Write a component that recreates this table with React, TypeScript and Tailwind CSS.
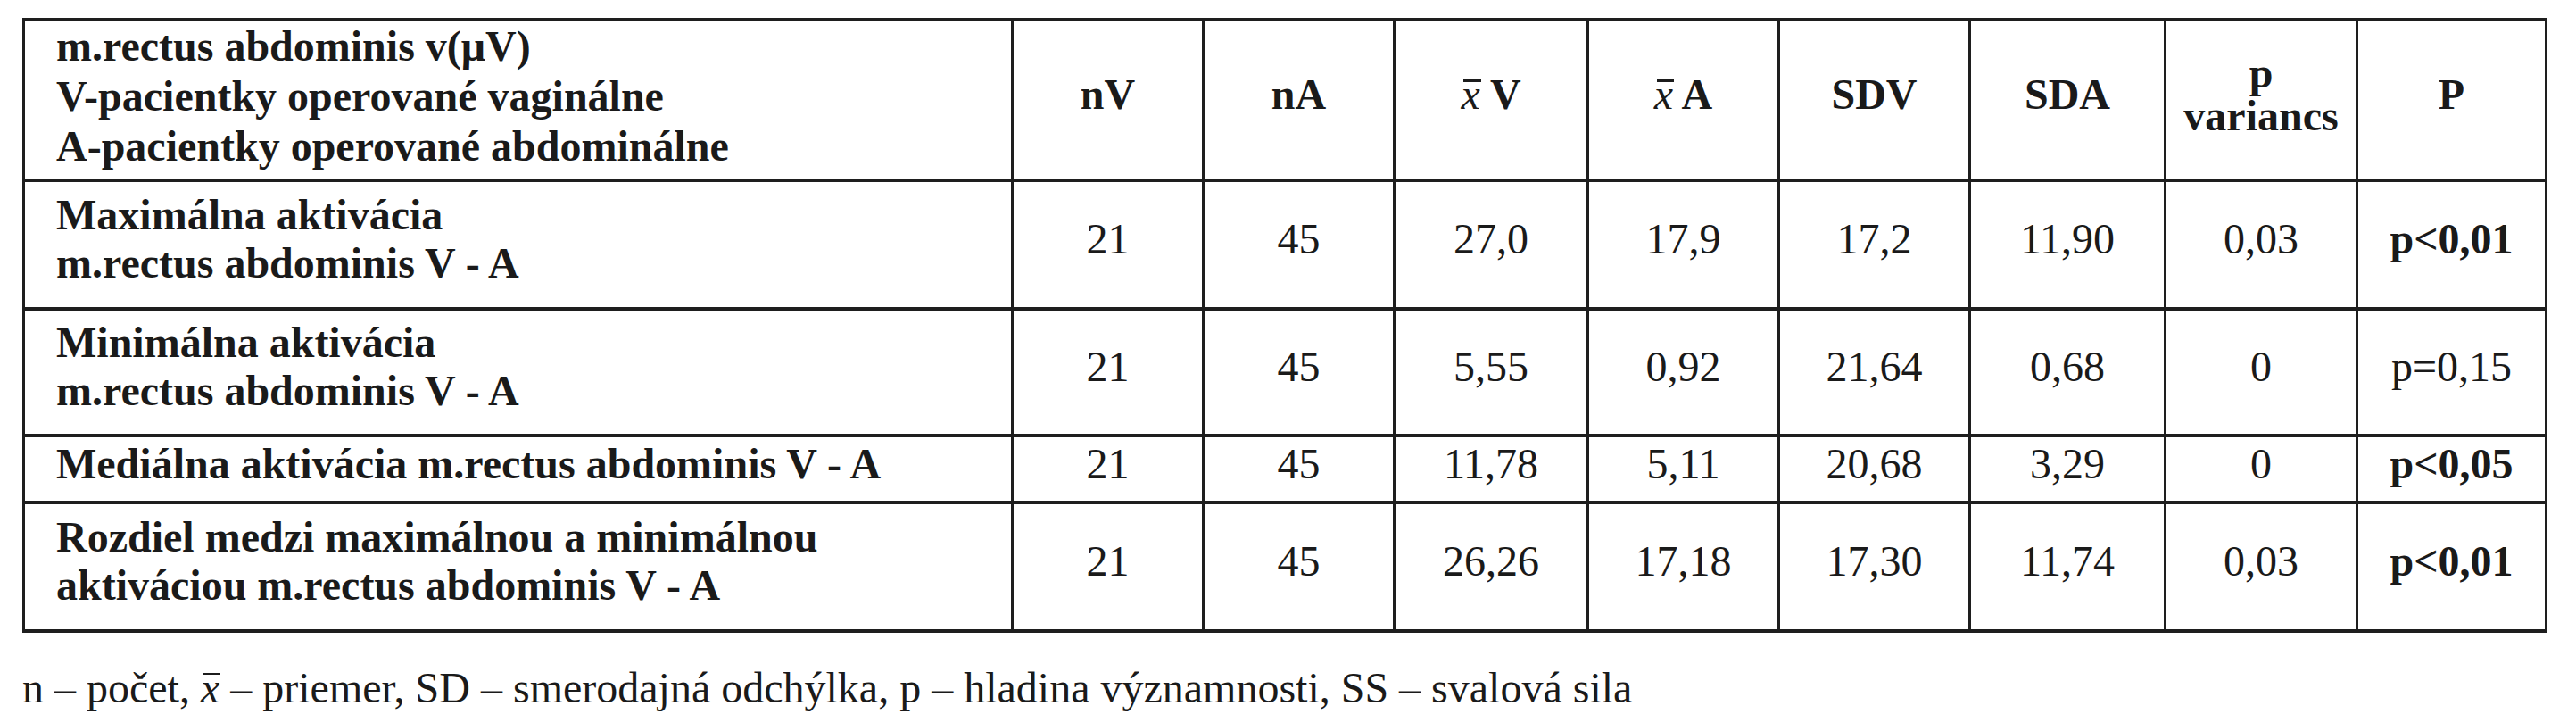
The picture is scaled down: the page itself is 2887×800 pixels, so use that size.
import React from "react";

type Row = {
  label: React.ReactNode;
  values: string[];
  p: string;
  pBold: boolean;
};

const rows: Row[] = [
  {
    label: (
      <>
        Maximálna aktivácia
        <br />
        m.rectus abdominis V - A
      </>
    ),
    values: ["21", "45", "27,0", "17,9", "17,2", "11,90", "0,03"],
    p: "p<0,01",
    pBold: true,
  },
  {
    label: (
      <>
        Minimálna aktivácia
        <br />
        m.rectus abdominis V - A
      </>
    ),
    values: ["21", "45", "5,55", "0,92", "21,64", "0,68", "0"],
    p: "p=0,15",
    pBold: false,
  },
  {
    label: <>Mediálna aktivácia m.rectus abdominis V - A</>,
    values: ["21", "45", "11,78", "5,11", "20,68", "3,29", "0"],
    p: "p<0,05",
    pBold: true,
  },
  {
    label: (
      <>
        Rozdiel medzi maximálnou a minimálnou
        <br />
        aktiváciou m.rectus abdominis V - A
      </>
    ),
    values: ["21", "45", "26,26", "17,18", "17,30", "11,74", "0,03"],
    p: "p<0,01",
    pBold: true,
  },
];

function XBar({ barTop, barH }: { barTop: string; barH: string }) {
  return (
    <span className="relative inline-block italic font-normal">
      x
      <span className={`absolute left-[3px] right-[-1px] bg-[#1c1c1c] ${barTop} ${barH}`} />
    </span>
  );
}

function HeadCell({ children }: { children: React.ReactNode }) {
  return (
    <div className="flex items-center justify-center bg-white pb-[12px] text-center font-bold leading-[54px]">
      {children}
    </div>
  );
}

function NumCell({ children, bold }: { children: React.ReactNode; bold?: boolean }) {
  return (
    <div
      className={`flex items-center justify-center bg-white pb-[12px] text-center leading-[54px] ${
        bold ? "font-bold" : "font-normal"
      }`}
    >
      {children}
    </div>
  );
}

export default function App() {
  return (
    <div className="min-h-[800px] w-[2887px] bg-white pt-[20px] font-['Liberation_Serif','Times_New_Roman',serif] text-[48px] text-[#1a1a1a]">
      <div className="ml-[25px] w-max bg-[#1e1e1e] px-[3px] py-[4px]">
        <div className="grid grid-cols-[1105px_211px_211px_214px_211px_211px_216px_212px_209px] grid-rows-[176px_140px_138px_71px_140px] gap-x-[3px] gap-y-[4px]">
          {/* header */}
          <div className="bg-white pl-[35px] font-bold leading-[56px]">
            m.rectus abdominis v(μV)
            <br />
            V-pacientky operované vaginálne
            <br />
            A-pacientky operované abdominálne
          </div>
          <HeadCell>nV</HeadCell>
          <HeadCell>nA</HeadCell>
          <HeadCell>
            <span>
              <XBar barTop="top-[10px]" barH="h-[3px]" /> V
            </span>
          </HeadCell>
          <HeadCell>
            <span>
              <XBar barTop="top-[10px]" barH="h-[3px]" /> A
            </span>
          </HeadCell>
          <HeadCell>SDV</HeadCell>
          <HeadCell>SDA</HeadCell>
          <div className="flex flex-col items-center justify-center bg-white pb-[12px] text-center font-bold leading-[48px]">
            <span>p</span>
            <span>variancs</span>
          </div>
          <HeadCell>P</HeadCell>

          {rows.map((r, i) => (
            <React.Fragment key={i}>
              <div className="flex items-center bg-white pb-[12px] pl-[35px] font-bold leading-[54px]">
                <div>{r.label}</div>
              </div>
              {r.values.map((v, j) => (
                <NumCell key={j}>{v}</NumCell>
              ))}
              <NumCell bold={r.pBold}>{r.p}</NumCell>
            </React.Fragment>
          ))}
        </div>
      </div>

      <div className="ml-[25px] mt-[34px] whitespace-nowrap leading-[56px]">
        n – počet, <XBar barTop="top-[11px]" barH="h-[2px]" /> – priemer, SD – smerodajná odchýlka, p – hladina
        významnosti, SS – svalová sila
      </div>
    </div>
  );
}
